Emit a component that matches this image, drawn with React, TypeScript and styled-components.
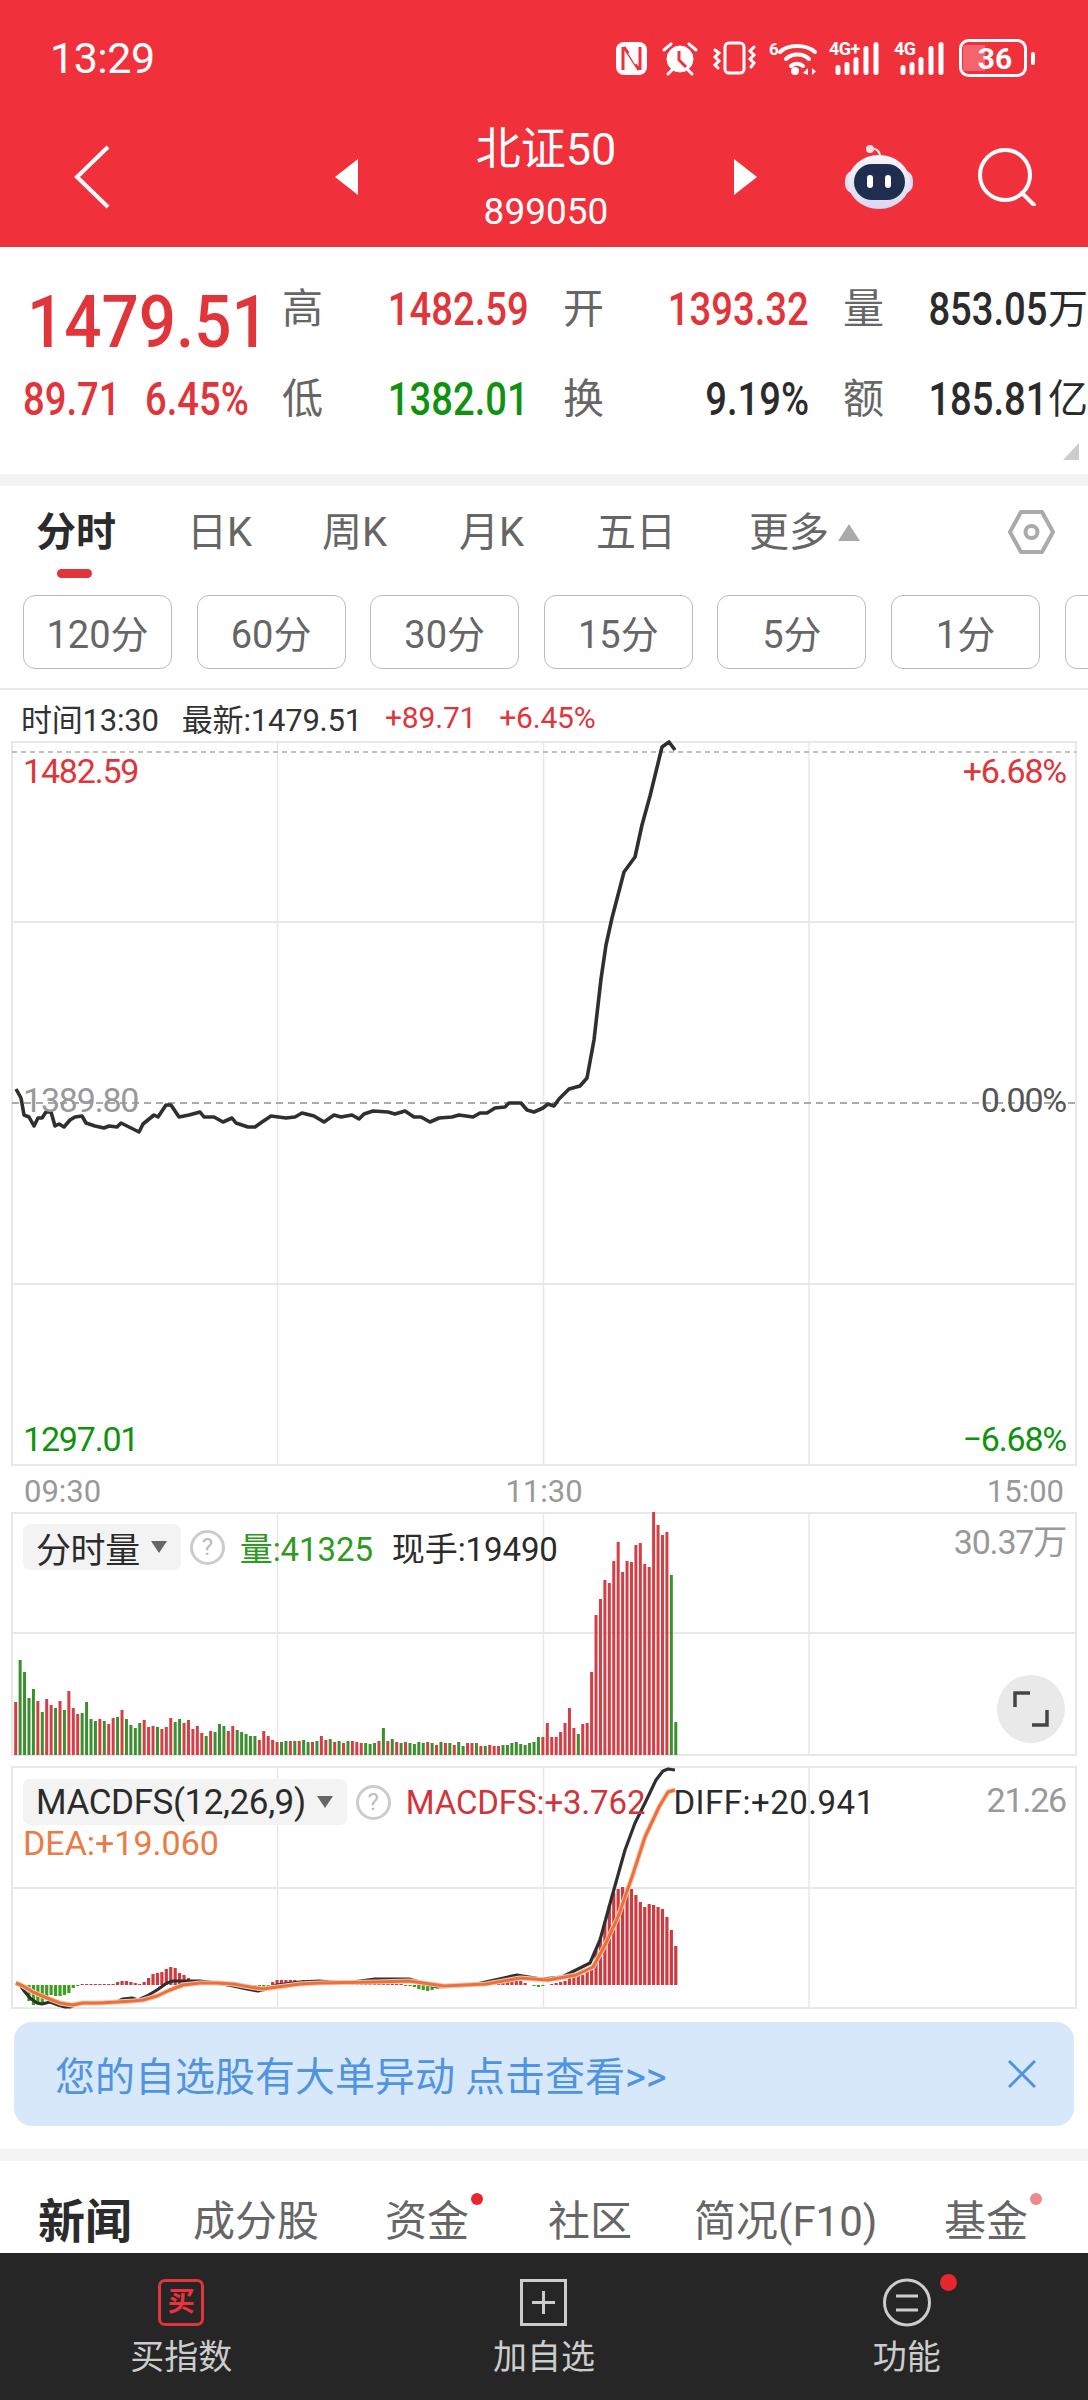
import React from 'react';
import styled, { createGlobalStyle } from 'styled-components';

const RED = '#e0353a';
const GREEN = '#0f930f';
const GRID = '#e8e8e8';

const GlobalStyle = createGlobalStyle`
    html, body {
        margin: 0;
        padding: 0;
        background: #fff;
    }
    body {
        font-family: Roboto, "Noto Sans CJK SC", sans-serif;
    }
`;

const Page = styled.div`
    width: 1088px;
    height: 2400px;
    overflow: hidden;
    display: flex;
    flex-direction: column;
    background: #fff;
`;

/* header */
const Header = styled.header`
    height: 247px;
    flex: none;
    background: #f0313c;
    color: #fff;
    display: flex;
    flex-direction: column;
`;

const StatusBar = styled.div`
    height: 116px;
    display: flex;
    align-items: center;
    padding-left: 50px;
`;

const Clock = styled.div`
    font-size: 43px;
    line-height: 43px;
    letter-spacing: -0.5px;
    flex: 1;
`;

const StatusIcons = styled.div`
    display: flex;
    align-items: center;
    padding-right: 53px;
`;

const StatusGlyph = styled.svg<{ $gap?: number }>`
    margin-right: ${({ $gap }) => $gap ?? 0}px;
    overflow: visible;
`;

const NavBar = styled.div`
    height: 131px;
    box-sizing: border-box;
    padding: 0 0 10px 74px;
    display: flex;
    align-items: center;
`;

const TitleBlock = styled.div`
    width: 376px;
    display: flex;
    flex-direction: column;
    align-items: center;
`;

const Title = styled.div`
    font-size: 45px;
    line-height: 54px;
    margin-top: 2px;
`;

const Code = styled.div`
    font-size: 37px;
    line-height: 42px;
    margin-top: 14px;
`;

const PagerArrow = styled.div<{ $dir: 'left' | 'right' }>`
    width: 0;
    height: 0;
    border-top: 18px solid transparent;
    border-bottom: 18px solid transparent;
    border-${({ $dir }) => ($dir === 'left' ? 'right' : 'left')}: 23px solid #fff;
    margin-left: ${({ $dir }) => ($dir === 'left' ? '225px' : '0')};
`;

const RobotWrap = styled.div`
    margin-left: 87px;
    display: flex;
`;

const SearchWrap = styled.div`
    margin-left: 64px;
    display: flex;
`;

/* quote */
const Quote = styled.section`
    height: 227px;
    flex: none;
    position: relative;
    padding-top: 17px;
    box-sizing: border-box;
    display: grid;
    grid-template-columns: 282px 41px 206px 34px 41px 205px 34px 41px 204px;
    grid-template-rows: 90px 90px;
    align-items: center;
`;

const BigPrice = styled.div`
    font-size: 72px;
    font-weight: 500;
    line-height: 72px;
    color: ${RED};
    padding: 28px 0 0 27px;
    transform: scaleX(0.91);
    transform-origin: 27px center;
    white-space: nowrap;
`;

const Change = styled.div`
    display: flex;
    padding-left: 23px;
    color: ${RED};
    font-size: 46px;
    font-weight: 500;
`;

const ChangeItem = styled.span<{ $width: number }>`
    width: ${({ $width }) => $width}px;
    display: inline-block;
    transform: scaleX(0.83);
    transform-origin: left center;
    white-space: nowrap;
`;

const QuoteLabel = styled.div<{ $column?: number }>`
    ${({ $column }) => ($column ? `grid-column: ${$column};` : '')}
    font-size: 41px;
    color: #666;
    line-height: 45px;
`;

const QuoteValue = styled.div<{ $column: number; $color?: string }>`
    grid-column: ${({ $column }) => $column};
    display: flex;
    justify-content: flex-end;
    align-items: center;
    color: ${({ $color }) => $color ?? '#2b2b2b'};
    white-space: nowrap;
    line-height: 45px;
`;

const QuoteNum = styled.span`
    font-size: 46px;
    font-weight: 500;
    display: inline-block;
    transform: scaleX(0.83);
    transform-origin: right center;
`;

const QuoteUnit = styled.span`
    font-size: 40px;
`;

const ExpandCorner = styled.div`
    position: absolute;
    right: 9px;
    bottom: 14px;
    width: 0;
    height: 0;
    border-bottom: 17px solid #ccc;
    border-left: 16px solid transparent;
`;

const Band = styled.div`
    height: 12px;
    background: #f4f4f4;
    flex: none;
`;

/* tabs */
const TabRow = styled.div`
    height: 109px;
    flex: none;
    box-sizing: border-box;
    padding: 24px 33px 0 36px;
    display: grid;
    grid-template-columns: 151px 135px 137px 137px 153px 1fr auto;
    align-items: start;
`;

const Tab = styled.div<{ $active?: boolean }>`
    position: relative;
    font-size: 40px;
    line-height: 46px;
    color: ${({ $active }) => ($active ? '#2b2b2b' : '#666')};
    font-weight: ${({ $active }) => ($active ? 700 : 400)};
    display: flex;
    align-items: center;
    white-space: nowrap;

    ${({ $active }) =>
        $active &&
        `
        &::after {
            content: '';
            position: absolute;
            left: 21px;
            top: 59px;
            width: 35px;
            height: 9px;
            border-radius: 5px;
            background: ${RED};
        }
    `}
`;

const UpCaret = styled.span`
    width: 0;
    height: 0;
    margin-left: 9px;
    margin-top: -2px;
    border-left: 11px solid transparent;
    border-right: 11px solid transparent;
    border-bottom: 17px solid #aaa;
`;

const PeriodRow = styled.div`
    height: 74px;
    flex: none;
    display: flex;
    gap: 24.6px;
    padding-left: 23px;
    overflow: hidden;
`;

const PeriodButton = styled.div`
    flex: 0 0 149px;
    box-sizing: border-box;
    height: 74px;
    padding-bottom: 2px;
    border: 1.5px solid #bbb;
    border-radius: 12px;
    font-size: 38px;
    color: #666;
    display: flex;
    align-items: center;
    justify-content: center;
`;

const InfoRow = styled.div`
    margin-top: 19px;
    height: 53px;
    flex: none;
    box-sizing: border-box;
    border-top: 2px solid #e8e8e8;
    padding: 3px 0 0 21px;
    display: flex;
    align-items: center;
    gap: 23px;
    font-size: 31px;
    letter-spacing: -0.2px;
    color: #333;
`;

const InfoItem = styled.span<{ $red?: boolean }>`
    color: ${({ $red }) => ($red ? RED : '#333')};
    font-size: ${({ $red }) => ($red ? 30 : 31)}px;
    white-space: nowrap;
`;

/* chart panels */
const ChartPanel = styled.div<{ $height: number }>`
    position: relative;
    height: ${({ $height }) => $height}px;
    flex: none;

    svg {
        display: block;
        overflow: visible;
    }
`;

const ChartLabel = styled.div<{
    $left?: number;
    $right?: number;
    $top: number;
    $color: string;
}>`
    position: absolute;
    top: ${({ $top }) => $top}px;
    ${({ $left }) => ($left !== undefined ? `left: ${$left}px;` : '')}
    ${({ $right }) => ($right !== undefined ? `right: ${$right}px;` : '')}
    color: ${({ $color }) => $color};
    font-size: 34px;
    line-height: 40px;
    letter-spacing: -1.2px;
`;

const AxisRow = styled.div`
    height: 45px;
    flex: none;
    box-sizing: border-box;
    padding: 3px 24px 0;
    display: flex;
    align-items: center;
    justify-content: space-between;
    font-size: 31px;
    color: #999;
`;

const Legend = styled.div<{ $top: number }>`
    position: absolute;
    left: 23px;
    top: ${({ $top }) => $top}px;
    display: flex;
    flex-direction: column;
`;

const LegendRow = styled.div`
    height: 46px;
    display: flex;
    align-items: center;
    white-space: nowrap;
    font-size: 33px;
`;

const LegendTag = styled.div<{ $size: number }>`
    height: 46px;
    box-sizing: border-box;
    padding: 0 14px 0 13px;
    background: #f3f3f3;
    border-radius: 7px;
    display: flex;
    align-items: center;
    gap: 11px;
    color: #2b2b2b;
    font-size: ${({ $size }) => $size}px;
    letter-spacing: -0.4px;
`;

const DownCaret = styled.span`
    width: 0;
    height: 0;
    border-left: 8px solid transparent;
    border-right: 8px solid transparent;
    border-top: 12px solid #666;
`;

const HelpMark = styled.div`
    width: 35px;
    height: 35px;
    box-sizing: border-box;
    margin: 0 15px 0 9px;
    border: 3px solid #ccc;
    border-radius: 50%;
    color: #bbb;
    font-size: 24px;
    display: flex;
    align-items: center;
    justify-content: center;
`;

const LegendValue = styled.span<{ $color: string; $gap?: number; $spacing?: number }>`
    color: ${({ $color }) => $color};
    margin-right: ${({ $gap }) => $gap ?? 0}px;
    letter-spacing: ${({ $spacing }) => $spacing ?? -0.1}px;
`;

const DeaRow = styled.div`
    color: #ec7a45;
    font-size: 34px;
    line-height: 36px;
`;

const ExpandButton = styled.div`
    position: absolute;
    right: 23px;
    top: 163px;
    width: 68px;
    height: 68px;
    border-radius: 50%;
    background: #e9e9e9;
    display: flex;
    align-items: center;
    justify-content: center;
`;

/* banner */
const Banner = styled.div`
    margin: 12px 14px 23px;
    height: 104px;
    flex: none;
    border-radius: 18px;
    background: #d8e8fb;
    color: #4f94e0;
    display: flex;
    align-items: center;
    justify-content: space-between;
    padding: 0 38px 0 41px;
    font-size: 40px;
`;

/* news tabs */
const NewsRow = styled.div`
    height: 92px;
    flex: none;
    box-sizing: border-box;
    padding: 29px 0 0 38px;
    display: grid;
    grid-template-columns: 155px 192px 163px 146px 250px auto;
    align-items: center;
    justify-content: start;
`;

const NewsTab = styled.div<{ $active?: boolean; $dot?: string }>`
    position: relative;
    justify-self: start;
    line-height: 54px;
    font-size: ${({ $active }) => ($active ? 47 : 42)}px;
    font-weight: ${({ $active }) => ($active ? 700 : 400)};
    color: ${({ $active }) => ($active ? '#2b2b2b' : '#666')};
    white-space: nowrap;

    ${({ $dot }) =>
        $dot &&
        `
        &::after {
            content: '';
            position: absolute;
            top: -2px;
            right: -14px;
            width: 12px;
            height: 12px;
            border-radius: 50%;
            background: ${$dot};
        }
    `}
`;

/* bottom bar */
const BottomBar = styled.nav`
    height: 147px;
    flex: none;
    background: #262626;
    display: grid;
    grid-template-columns: repeat(3, 1fr);
    padding-top: 24px;
    box-sizing: border-box;
`;

const BarItem = styled.div`
    display: flex;
    flex-direction: column;
    align-items: center;
    color: #ccc;
    font-size: 34px;
`;

const BarIcon = styled.div`
    position: relative;
    height: 50px;
    display: flex;
    align-items: center;
    justify-content: center;
`;

const BuyIcon = styled.div`
    width: 46px;
    height: 47px;
    box-sizing: border-box;
    border: 3px solid ${RED};
    border-radius: 7px;
    color: #f0313c;
    font-size: 27px;
    font-weight: 700;
    line-height: 1;
    display: flex;
    align-items: center;
    justify-content: center;
`;

const BarLabel = styled.div`
    margin-top: 10px;
    line-height: 40px;
`;

const RedDot = styled.span`
    position: absolute;
    top: -3px;
    right: -26px;
    width: 17px;
    height: 17px;
    border-radius: 50%;
    background: #e8272d;
`;

/* data */
const pathOf = (pts: number[][]) => 'M' + pts.map(p => p.join(' ')).join('L');

const PRICE_LINE = [
    [16, 1089], [21, 1098], [24, 1115], [29, 1117], [34, 1126], [38, 1118], [42, 1118], [46, 1112], [51, 1112],
    [55, 1126], [59, 1124], [64, 1127], [70, 1120], [75, 1117], [82, 1116], [86, 1123], [95, 1126], [104, 1128],
    [109, 1126], [117, 1127], [121, 1123], [127, 1126], [133, 1129], [139, 1132], [143, 1124], [154, 1115],
    [158, 1117], [166, 1105], [171, 1105], [179, 1117], [189, 1115], [200, 1112], [204, 1117], [214, 1117],
    [223, 1122], [232, 1118], [236, 1123], [248, 1127], [255, 1127], [262, 1122], [271, 1116], [286, 1118],
    [295, 1117], [302, 1113], [314, 1116], [324, 1122], [334, 1115], [341, 1117], [352, 1115], [359, 1119],
    [364, 1114], [373, 1111], [388, 1112], [395, 1114], [405, 1111], [414, 1117], [421, 1117], [430, 1122],
    [439, 1118], [452, 1117], [459, 1115], [473, 1117], [480, 1113], [487, 1113], [495, 1108], [505, 1107],
    [509, 1103], [521, 1103], [527, 1110], [534, 1112], [543, 1108], [548, 1104], [554, 1106], [559, 1099],
    [569, 1089], [580, 1086], [587, 1078], [594, 1040], [601, 979], [606, 945], [612, 918], [624, 872], [635, 857],
    [642, 825], [650, 796], [662, 747], [669, 742], [675, 750],
];

const VOLUME: [number, 'r' | 'g'][] = [
    '53r 95g 83g 57g 66g 54r 43g 56r 50r 47g',
    '54r 45g 64r 47r 41r 42g 53g 36g 34g 36r',
    '34g 31r 37r 38g 45r 36g 30g 27g 32g 35r',
    '28r 29r 28g 26r 28r 37r 33g 36g 32r 35r',
    '26r 29r 22r 19g 24r 23g 31g 29g 24r 29r',
    '25g 23g 21g 19g 19g 15r 24r 19r 15r 13r',
    '13g 14g 14r 14g 14r 15g 13g 13r 14g 19r',
    '15r 16g 13r 14g 12r 14g 14r 13r 12r 12g',
    '11g 12g 14r 27g 14r 16g 13r 12g 13r 12g',
    '11g 13g 12g 13r 12g 10r 13g 12r 12g 10r',
    '13g 9g 12r 12r 12g 9r 9g 10r 9r 9r',
    '10g 10g 12g 13g 11g 10g 12g 13g 18g 18r',
    '32r 18r 18r',
    '23r 32r 47r 27r 21g 31r 32r 83r 140r 156r',
    '175r 172r 194r 213r 183r 194r 193r 210r 212r 191r',
    '188r 243r 230r 220r 223r 180g 33g',
]
    .join(' ')
    .split(' ')
    .map(v => [parseInt(v, 10), v.slice(-1) as 'r' | 'g']);

const MACD_HIST = [
    0, 0, -7, -16, -20, -18, -18, -13, -10, -11, -11, -10, -8, -3, -1, 1, 1, 1, 1, 1,
    1, 1, 1, 3, 4, 4, 3, 2, 1, 3, 7, 11, 12, 13, 16, 18, 17, 12, 10, 7,
    5, 5, 4, 3, 2, 1, 1, 1, -1, -2, -2, -3, -3, -2, -2, -3, -3, -2, 3, 5,
    5, 5, 5, 5, 4, 5, 5, 3, 3, 3, 2, 2, 3, 3, 3, 2, 2, 3, 3, 3,
    2, 2, 2, 2, 2, 1, 1, 1, -1, -1, -2, -4, -5, -6, -5, -3, -2, -1, 1, 1,
    1, 2, 2, 2, 3, 3, 3, 4, 4, 5, 5, 6, 5, 5, 4, 2, 0, -1, -2, -1,
    0, 1, 2, 3, 4, 7, 9, 10, 10, 13, 15, 35, 48, 63, 80, 92, 96, 98, 97, 96,
    90, 83, 78, 81, 80, 78, 76, 68, 55, 39,
];

const DIFF_LINE = [
    [16, 1983], [20, 1985], [25, 1992], [30, 1998], [37, 2003], [42, 2004], [50, 2002], [58, 2005], [65, 2007],
    [70, 2007], [77, 2004], [87, 2003], [103, 2003], [117, 2002], [123, 1999], [132, 1998], [138, 2000], [147, 1996],
    [157, 1990], [167, 1983], [173, 1981], [187, 1981], [200, 1981], [217, 1983], [233, 1986], [247, 1989],
    [258, 1991], [267, 1989], [277, 1985], [300, 1982], [319, 1981], [345, 1983], [375, 1979], [409, 1979],
    [437, 1987], [472, 1985], [517, 1975], [541, 1979], [562, 1977], [576, 1970], [590, 1963], [600, 1940],
    [611, 1900], [625, 1850], [635, 1823], [645, 1803], [656, 1780], [663, 1771], [668, 1769], [675, 1770],
];

const DEA_LINE = [
    [16, 1983], [23, 1986], [33, 1992], [47, 1998], [60, 2003], [72, 2005], [83, 2003], [100, 2003], [117, 2002],
    [133, 2001], [143, 2000], [157, 1996], [170, 1990], [183, 1985], [200, 1983], [217, 1983], [233, 1984],
    [250, 1987], [263, 1989], [277, 1987], [300, 1984], [319, 1983], [375, 1982], [409, 1981], [444, 1986],
    [486, 1984], [520, 1978], [548, 1980], [576, 1975], [593, 1967], [604, 1947], [618, 1917], [632, 1877],
    [645, 1837], [659, 1807], [668, 1792], [675, 1790],
];

const barX = (i: number) => 15.7 + i * 4.43;

const PERIODS = ['120分', '60分', '30分', '15分', '5分', '1分', ''];

const SIGNAL_BARS = [
    [9, 23, 10],
    [18, 20, 13],
    [27, 15, 18],
    [37, 4, 29],
    [47, 0, 33],
];

/* drawings */
const GridLines = ({ top, bottom, mid }: { top: number; bottom: number; mid: number[] }) => (
    <g stroke={GRID} fill='none'>
        <rect x='12' y={top} width='1064' height={bottom - top} strokeWidth='2' />
        {[277.5, 543.5, 809].map(x => (
            <line key={x} x1={x} x2={x} y1={top} y2={bottom} strokeWidth='1.5' />
        ))}
        {mid.map(y => (
            <line key={y} x1='12' x2='1076' y1={y} y2={y} strokeWidth='2' />
        ))}
    </g>
);

const NfcIcon = () => (
    <StatusGlyph $gap={15} width='31' height='33' viewBox='0 0 31 33'>
        <rect width='31' height='33' rx='8' fill='#fff' />
        <path d='M7 5v23M24 5v23M8 5l15 23' stroke='#f0313c' strokeWidth='3' fill='none' />
        <path d='M13 11l7 11' stroke='#fff' strokeWidth='2' />
    </StatusGlyph>
);

const AlarmIcon = () => (
    <StatusGlyph $gap={15} width='36' height='34' viewBox='0 0 36 34' fill='none' stroke='#fff'>
        <circle cx='18' cy='18' r='13' fill='#fff' />
        <path d='M17 10v9l7 7' stroke='#f0313c' strokeWidth='3' />
        <path d='M2 9l7-6M34 9l-7-6M6 33l4-4M30 33l-4-4' strokeWidth='3' strokeLinecap='round' />
    </StatusGlyph>
);

const VibrateIcon = () => (
    <StatusGlyph $gap={12} width='43' height='34' viewBox='0 0 43 34' fill='none' stroke='#fff' strokeWidth='3'>
        <rect x='12' y='2' width='19' height='30' rx='4' />
        <path d='M2 9l4 3-4 4 4 4-4 4 3 3M41 6l-4 4 4 4-4 4 4 4-3 4' strokeLinecap='round' />
    </StatusGlyph>
);

const WifiIcon = () => (
    <StatusGlyph $gap={12} width='49' height='36' viewBox='0 0 49 36' fill='none' stroke='#fff'>
        <text x='1' y='15' fill='#fff' stroke='none' fontSize='17' fontFamily='Roboto' fontWeight='700'>6</text>
        <path d='M12 12c8-8 26-8 35 0M18 19c6-6 17-6 23 0M23 26c3-3 9-3 12 0' strokeWidth='4' strokeLinecap='round' />
        <circle cx='27' cy='31' r='4' fill='#fff' stroke='none' />
        <path d='M35 33l5-5v7M44 28v7l4-3.5z' fill='#fff' stroke='none' />
    </StatusGlyph>
);

const SignalIcon = ({ label, gap }: { label: string; gap: number }) => (
    <StatusGlyph $gap={gap} width='51' height='36' viewBox='0 0 51 36'>
        <text x='0' y='15' fill='#fff' fontSize='18' fontFamily='Roboto' fontWeight='700' letterSpacing='-0.5'>{label}</text>
        {SIGNAL_BARS.map(([x, y, h]) => (
            <rect key={x} x={x - 2.5} y={y + 2} width='5' height={h} rx='2.5' fill='#fff' />
        ))}
    </StatusGlyph>
);

const BatteryIcon = () => (
    <StatusGlyph width='76' height='38' viewBox='0 0 76 38'>
        <rect x='1.5' y='1.5' width='65' height='35' rx='8' fill='none' stroke='#fff' strokeWidth='3' />
        <path d='M6 6h20v26H6a2 2 0 0 1-2-2V8a2 2 0 0 1 2-2z' fill='#fff' opacity='0.25' />
        <text x='36' y='30' fill='#fff' fontSize='30' fontFamily='Roboto' fontWeight='700' textAnchor='middle'>36</text>
        <rect x='72' y='13' width='4' height='13' rx='2' fill='#fff' />
    </StatusGlyph>
);

const RobotIcon = () => (
    <svg width='70' height='66' viewBox='0 0 70 66'>
        <defs>
            <linearGradient id='robotHead' x1='0' y1='0' x2='0' y2='1'>
                <stop offset='0' stopColor='#f6f5fb' />
                <stop offset='1' stopColor='#d9d8f0' />
            </linearGradient>
        </defs>
        <path d='M27 5c5-1 9 2 9 8' stroke='#f3e9ea' strokeWidth='2' fill='none' />
        <circle cx='26' cy='5' r='4' fill='#f6dfe2' />
        <rect x='1' y='26' width='68' height='24' rx='10' fill='#dcdcf2' />
        <ellipse cx='35' cy='38' rx='31' ry='27' fill='url(#robotHead)' />
        <rect x='10' y='20' width='51' height='36' rx='18' fill='#1f2d4f' />
        <rect x='23' y='31' width='6' height='13' rx='3' fill='#fff' />
        <rect x='41' y='31' width='6' height='13' rx='3' fill='#fff' />
    </svg>
);

const App: React.FC = () => (
    <Page>
        <GlobalStyle />
        <Header>
            <StatusBar>
                <Clock>13:29</Clock>
                <StatusIcons>
                    <NfcIcon />
                    <AlarmIcon />
                    <VibrateIcon />
                    <WifiIcon />
                    <SignalIcon label='4G+' gap={14} />
                    <SignalIcon label='4G' gap={14} />
                    <BatteryIcon />
                </StatusIcons>
            </StatusBar>
            <NavBar>
                <svg width='36' height='64' viewBox='0 0 36 64' fill='none' stroke='#fff' strokeWidth='4'>
                    <path d='M34 2L3 32l31 30' />
                </svg>
                <PagerArrow $dir='left' />
                <TitleBlock>
                    <Title>北证50</Title>
                    <Code>899050</Code>
                </TitleBlock>
                <PagerArrow $dir='right' />
                <RobotWrap><RobotIcon /></RobotWrap>
                <SearchWrap>
                    <svg width='58' height='58' viewBox='0 0 58 58' fill='none' stroke='#fff' strokeWidth='4'>
                        <circle cx='27' cy='27' r='25' />
                        <path d='M44 45l12 12' strokeLinecap='round' />
                    </svg>
                </SearchWrap>
            </NavBar>
        </Header>
        <Quote>
            <BigPrice>1479.51</BigPrice>
            <QuoteLabel>高</QuoteLabel>
            <QuoteValue $column={3} $color={RED}><QuoteNum>1482.59</QuoteNum></QuoteValue>
            <QuoteLabel $column={5}>开</QuoteLabel>
            <QuoteValue $column={6} $color={RED}><QuoteNum>1393.32</QuoteNum></QuoteValue>
            <QuoteLabel $column={8}>量</QuoteLabel>
            <QuoteValue $column={9}><QuoteNum>853.05</QuoteNum><QuoteUnit>万</QuoteUnit></QuoteValue>
            <Change>
                <ChangeItem $width={122}>89.71</ChangeItem>
                <ChangeItem $width={110}>6.45%</ChangeItem>
            </Change>
            <QuoteLabel>低</QuoteLabel>
            <QuoteValue $column={3} $color={GREEN}><QuoteNum>1382.01</QuoteNum></QuoteValue>
            <QuoteLabel $column={5}>换</QuoteLabel>
            <QuoteValue $column={6}><QuoteNum>9.19%</QuoteNum></QuoteValue>
            <QuoteLabel $column={8}>额</QuoteLabel>
            <QuoteValue $column={9}><QuoteNum>185.81</QuoteNum><QuoteUnit>亿</QuoteUnit></QuoteValue>
            <ExpandCorner />
        </Quote>
        <Band />
        <TabRow>
            <Tab $active>分时</Tab>
            <Tab>日K</Tab>
            <Tab>周K</Tab>
            <Tab>月K</Tab>
            <Tab>五日</Tab>
            <Tab>更多<UpCaret /></Tab>
            <svg width='47' height='44' viewBox='0 0 47 44' fill='none' stroke='#aaa'>
                <path d='M13 2h21l11 20-11 20H13L2 22z' strokeWidth='4' strokeLinejoin='round' />
                <circle cx='23.5' cy='22' r='6' strokeWidth='4' />
            </svg>
        </TabRow>
        <PeriodRow>
            {PERIODS.map((p, i) => (
                <PeriodButton key={i}>{p}</PeriodButton>
            ))}
        </PeriodRow>
        <InfoRow>
            <InfoItem>时间13:30</InfoItem>
            <InfoItem>最新:1479.51</InfoItem>
            <InfoItem $red>+89.71</InfoItem>
            <InfoItem $red>+6.45%</InfoItem>
        </InfoRow>
        <ChartPanel $height={726}>
            <svg width='1088' height='726' viewBox='0 741 1088 726'>
                <GridLines top={742} bottom={1465} mid={[922, 1284]} />
                <line x1='12' x2='1076' y1='752' y2='752' stroke='#b5ad95' strokeWidth='1.5' strokeDasharray='5 4' />
                <line x1='12' x2='1076' y1='1103' y2='1103' stroke='#aaa' strokeWidth='2' strokeDasharray='7 5' />
                <path d={pathOf(PRICE_LINE)} fill='none' stroke='#2f2f2f' strokeWidth='3.6' strokeLinejoin='round' />
            </svg>
            <ChartLabel $left={23} $top={10} $color={RED}>1482.59</ChartLabel>
            <ChartLabel $right={22} $top={10} $color={RED}>+6.68%</ChartLabel>
            <ChartLabel $left={23} $top={339} $color='#999'>1389.80</ChartLabel>
            <ChartLabel $right={22} $top={339} $color='#555'>0.00%</ChartLabel>
            <ChartLabel $left={23} $top={678} $color={GREEN}>1297.01</ChartLabel>
            <ChartLabel $right={22} $top={678} $color={GREEN}>−6.68%</ChartLabel>
        </ChartPanel>
        <AxisRow>
            <span>09:30</span>
            <span>11:30</span>
            <span>15:00</span>
        </AxisRow>
        <ChartPanel $height={244}>
            <svg width='1088' height='244' viewBox='0 1512 1088 244'>
                <GridLines top={1513} bottom={1755} mid={[1633]} />
                {VOLUME.map(([h, c], i) => (
                    <rect
                        key={i}
                        x={barX(i) - 1.5}
                        y={1755 - h}
                        width='3'
                        height={h}
                        fill={c === 'r' ? '#d33f45' : '#3c8f2e'}
                    />
                ))}
            </svg>
            <Legend $top={12}>
                <LegendRow>
                    <LegendTag $size={35}>分时量<DownCaret /></LegendTag>
                    <HelpMark>?</HelpMark>
                    <LegendValue $color='#2f9a22' $gap={19}>量:41325</LegendValue>
                    <LegendValue $color='#2b2b2b'>现手:19490</LegendValue>
                </LegendRow>
            </Legend>
            <ChartLabel $right={22} $top={10} $color='#999'>30.37万</ChartLabel>
            <ExpandButton>
                <svg width='36' height='36' viewBox='0 0 36 36' fill='none' stroke='#444' strokeWidth='3.5'>
                    <path d='M2 16V2h15M34 19v15H19' />
                </svg>
            </ExpandButton>
        </ChartPanel>
        <ChartPanel $height={254}>
            <svg width='1088' height='254' viewBox='0 1756 1088 254'>
                <GridLines top={1767} bottom={2008} mid={[1888]} />
                {MACD_HIST.map((v, i) => (
                    <rect
                        key={i}
                        x={barX(i) - 1.6}
                        y={v >= 0 ? 1985 - v : 1985}
                        width='3.2'
                        height={Math.abs(v)}
                        fill={v >= 0 ? '#cf3a41' : '#3f9f1f'}
                    />
                ))}
                <path d={pathOf(DIFF_LINE)} fill='none' stroke='#2f2f2f' strokeWidth='3.2' strokeLinejoin='round' />
                <path d={pathOf(DEA_LINE)} fill='none' stroke='#f4c9b4' strokeWidth='5' strokeLinejoin='round' />
                <path d={pathOf(DEA_LINE)} fill='none' stroke='#ec7038' strokeWidth='3' strokeLinejoin='round' />
            </svg>
            <Legend $top={23}>
                <LegendRow>
                    <LegendTag $size={35}>MACDFS(12,26,9)<DownCaret /></LegendTag>
                    <HelpMark>?</HelpMark>
                    <LegendValue $color='#d1343a' $gap={28}>MACDFS:+3.762</LegendValue>
                    <LegendValue $color='#2b2b2b' $spacing={0.5}>DIFF:+20.941</LegendValue>
                </LegendRow>
                <DeaRow>DEA:+19.060</DeaRow>
            </Legend>
            <ChartLabel $right={22} $top={24} $color='#999'>21.26</ChartLabel>
        </ChartPanel>
        <Banner>
            <span>您的自选股有大单异动 点击查看&gt;&gt;</span>
            <svg width='28' height='28' viewBox='0 0 28 28' stroke='#4f94e0' strokeWidth='3'>
                <path d='M1 1l26 26M27 1L1 27' />
            </svg>
        </Banner>
        <Band />
        <NewsRow>
            <NewsTab $active>新闻</NewsTab>
            <NewsTab>成分股</NewsTab>
            <NewsTab $dot='#e8272d'>资金</NewsTab>
            <NewsTab>社区</NewsTab>
            <NewsTab>简况(F10)</NewsTab>
            <NewsTab $dot='#ee8a8c'>基金</NewsTab>
        </NewsRow>
        <BottomBar>
            <BarItem>
                <BarIcon><BuyIcon>买</BuyIcon></BarIcon>
                <BarLabel>买指数</BarLabel>
            </BarItem>
            <BarItem>
                <BarIcon>
                    <svg width='47' height='47' viewBox='0 0 47 47' fill='none' stroke='#ccc' strokeWidth='3'>
                        <rect x='1.5' y='1.5' width='44' height='44' />
                        <path d='M23.5 12v23M12 23.5h23' />
                    </svg>
                </BarIcon>
                <BarLabel>加自选</BarLabel>
            </BarItem>
            <BarItem>
                <BarIcon>
                    <svg width='48' height='49' viewBox='0 0 48 49' fill='none' stroke='#ccc' strokeWidth='3'>
                        <circle cx='24' cy='24.5' r='22.5' />
                        <path d='M13 18h22M13 32h22' />
                    </svg>
                    <RedDot />
                </BarIcon>
                <BarLabel>功能</BarLabel>
            </BarItem>
        </BottomBar>
    </Page>
);

export default App;
